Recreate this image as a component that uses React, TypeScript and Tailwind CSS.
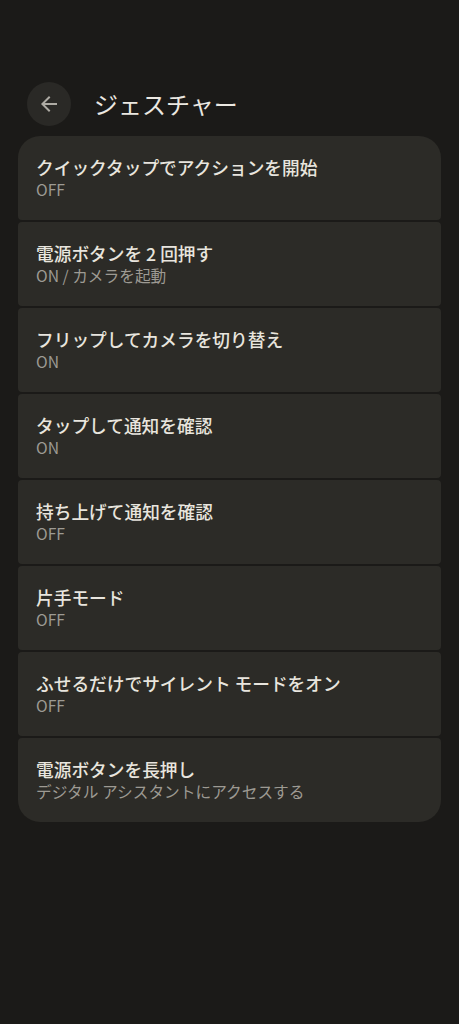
import { ReactNode } from 'react';

const ITEMS = [
  { title: 'クイックタップでアクションを開始', sub: 'OFF' },
  { title: '電源ボタンを 2 回押す', sub: 'ON / カメラを起動' },
  { title: 'フリップしてカメラを切り替え', sub: 'ON' },
  { title: 'タップして通知を確認', sub: 'ON' },
  { title: '持ち上げて通知を確認', sub: 'OFF' },
  { title: '片手モード', sub: 'OFF' },
  { title: 'ふせるだけでサイレント モードをオン', sub: 'OFF' },
  { title: '電源ボタンを長押し', sub: 'デジタル アシスタントにアクセスする' },
];

function Row({ title, sub, first, last }: { title: ReactNode; sub: ReactNode; first: boolean; last: boolean }) {
  return (
    <div
      className={`h-[84px] flex flex-col justify-center px-[18px] bg-[#2c2b27] ${
        first ? 'rounded-t-[22px] rounded-b-[4px]' : last ? 'rounded-b-[22px] rounded-t-[4px]' : 'rounded-[4px]'
      }`}
    >
      <div className="text-[17.7px] leading-[24px] font-medium text-[#e8e5de]">{title}</div>
      <div className="text-[15.7px] leading-[22px] text-[#9d9a93]">{sub}</div>
    </div>
  );
}

export default function App() {
  return (
    <div
      className="min-h-screen bg-[#1b1a18] pt-[82px]"
      style={{ fontFamily: '"Noto Sans CJK JP", "Noto Sans", sans-serif' }}
    >
      {/* header */}
      <div className="flex items-center pl-[27px]">
        <button className="w-[44px] h-[44px] rounded-full bg-[#2a2926] flex items-center justify-center" aria-label="Back">
          <svg width="24" height="24" viewBox="0 0 24 24" fill="#aeaba4">
            <path d="M20 11H7.83l5.59-5.59L12 4l-8 8 8 8 1.41-1.41L7.83 13H20v-2z" />
          </svg>
        </button>
        <h1 className="ml-[23px] text-[24px] leading-[30px] text-[#ebe8e1]">ジェスチャー</h1>
      </div>

      {/* list */}
      <div className="mt-[10px] mx-[18px] flex flex-col gap-[2px]">
        {ITEMS.map((it, i) => (
          <Row key={i} title={it.title} sub={it.sub} first={i === 0} last={i === ITEMS.length - 1} />
        ))}
      </div>
    </div>
  );
}
